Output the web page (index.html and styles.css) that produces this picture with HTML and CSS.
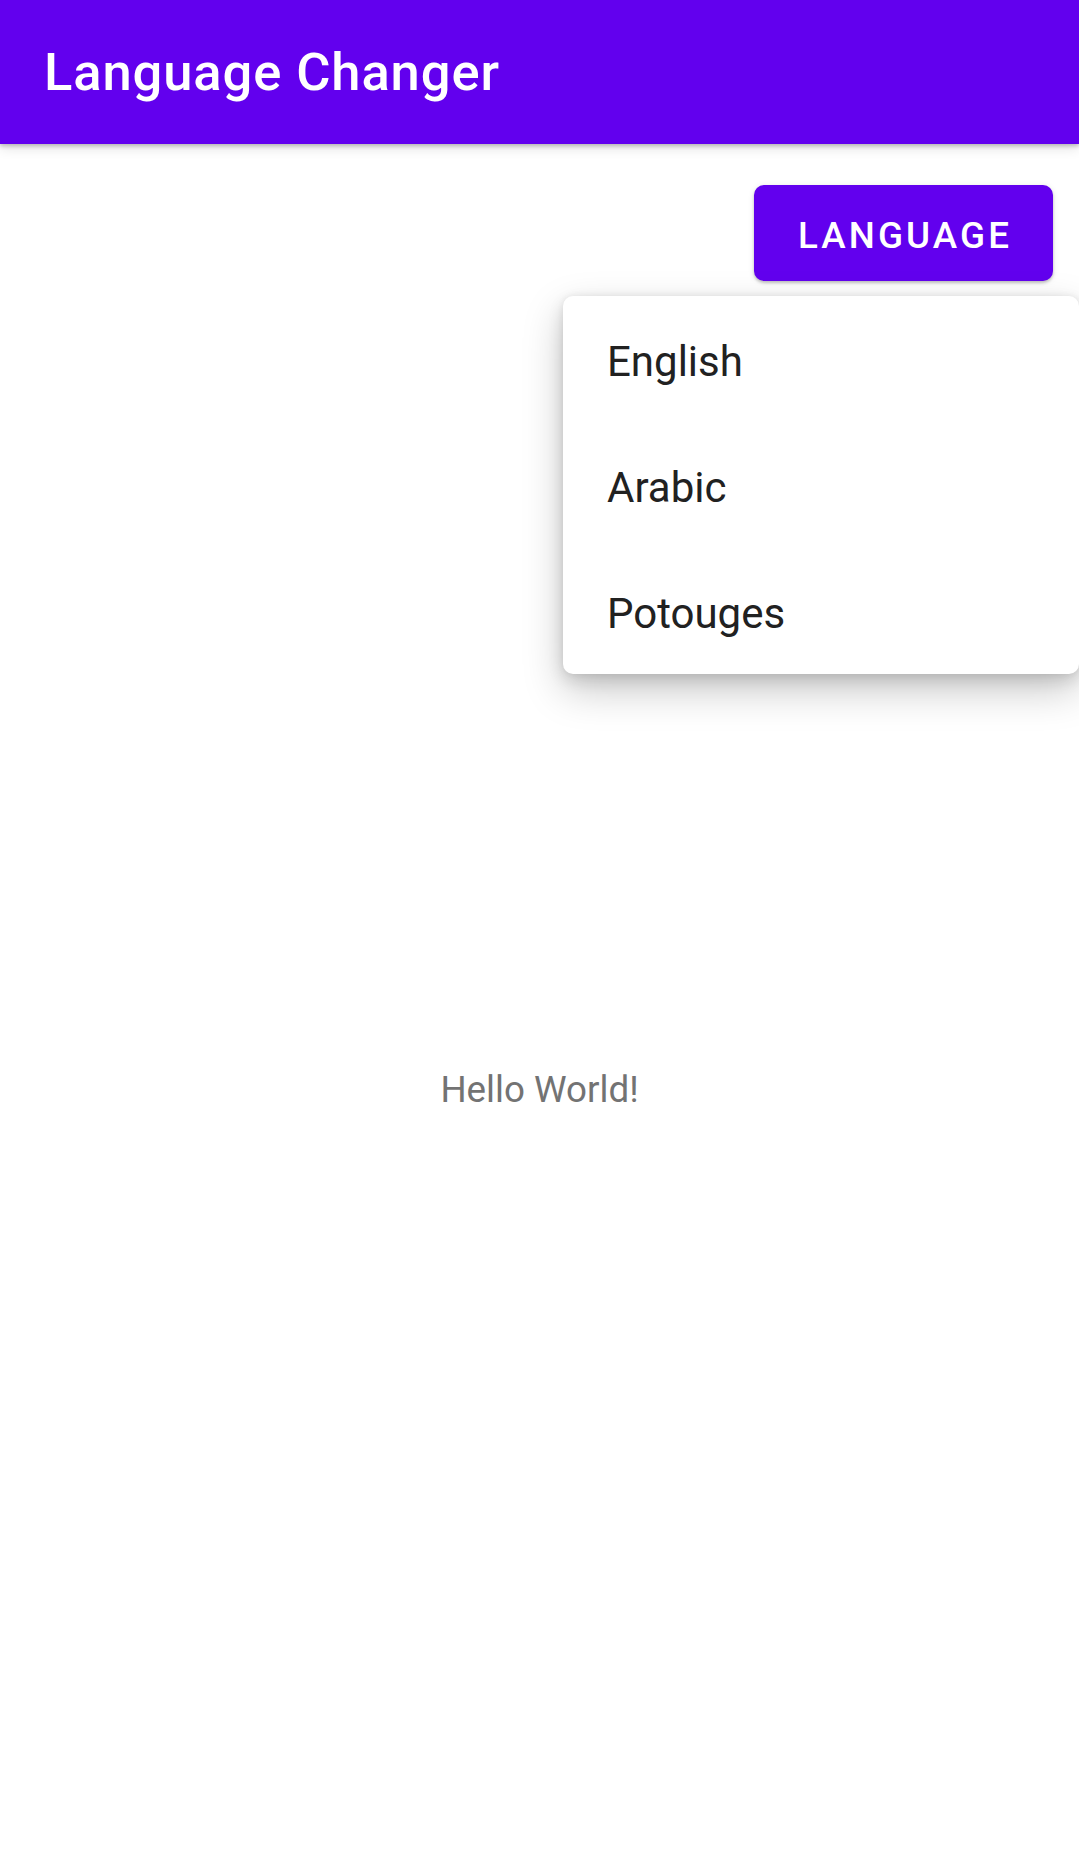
FILE: index.html
```html
<!DOCTYPE html>
<html lang="en">
<head>
<meta charset="utf-8">
<title>Language Changer</title>
<link rel="stylesheet" href="styles.css">
</head>
<body>
<header class="appbar">
  <h1 class="appbar-title">Language Changer</h1>
</header>
<main class="content">
  <div class="button-row">
    <button class="lang-button" type="button">LANGUAGE</button>
  </div>
  <p class="hello">Hello World!</p>
  <ul class="menu">
    <li class="menu-item">English</li>
    <li class="menu-item">Arabic</li>
    <li class="menu-item">Potouges</li>
  </ul>
</main>
</body>
</html>
```

FILE: styles.css
```css
html, body {
  margin: 0;
  padding: 0;
  background: #ffffff;
  font-family: Roboto, "Noto Sans", "Liberation Sans", sans-serif;
}

body {
  width: 1079px;
  height: 1853px;
  overflow: hidden;
  position: relative;
}

.appbar {
  height: 144px;
  background: #6200ee;
  display: flex;
  align-items: center;
  padding: 0 0 0 44px;
  box-sizing: border-box;
  box-shadow: 0 2px 4px rgba(0,0,0,0.22), 0 4px 12px rgba(0,0,0,0.12);
  position: relative;
  z-index: 2;
}

.appbar-title {
  margin: 0;
  color: #ffffff;
  font-size: 52.5px;
  font-weight: 500;
  letter-spacing: 0.9px;
  line-height: 1;
}

.content {
  display: flex;
  flex-direction: column;
}

.button-row {
  display: flex;
  justify-content: flex-end;
  padding: 41px 26px 0 0;
}

.lang-button {
  width: 299px;
  height: 96px;
  border: none;
  border-radius: 10px;
  background: #6200ee;
  color: #ffffff;
  font-family: Roboto, "Noto Sans", "Liberation Sans", sans-serif;
  font-size: 36.75px;
  font-weight: 500;
  letter-spacing: 3.1px;
  padding: 4px 0 0 3px;
  box-shadow: 0 2px 3px rgba(0,0,0,0.2), 0 1px 6px rgba(0,0,0,0.1);
}

.hello {
  margin: 787px 0 0 0;
  text-align: center;
  font-size: 36.75px;
  line-height: 43px;
  color: #737373;
}

.menu {
  position: absolute;
  top: 296px;
  left: 563px;
  right: 0;
  margin: 0;
  padding: 0;
  list-style: none;
  background: #ffffff;
  border-radius: 10px;
  box-shadow: 0 16px 40px rgba(0,0,0,0.22), 0 6px 16px rgba(0,0,0,0.12), 0 0 6px rgba(0,0,0,0.06);
  z-index: 3;
}

.menu-item {
  height: 126px;
  display: flex;
  align-items: center;
  padding: 4px 0 0 44px;
  box-sizing: border-box;
  font-size: 42px;
  color: #212121;
}
```
